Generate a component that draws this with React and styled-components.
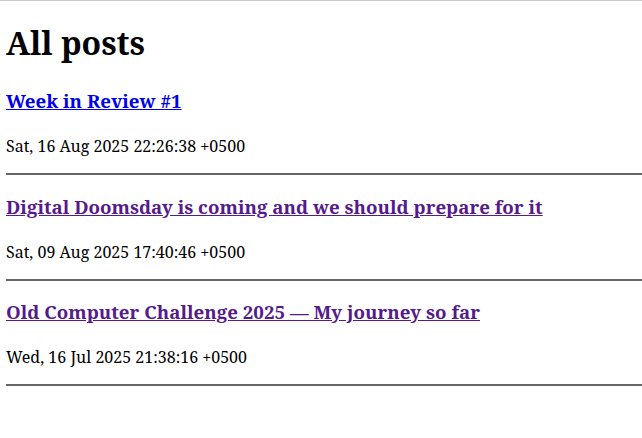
import { createGlobalStyle } from "styled-components";
import styled from "styled-components";

const GlobalStyle = createGlobalStyle`
  html {
    background: #fff;
    box-shadow: inset 0 1px 0 #c8c8c8;
  }
  body {
    margin: 0 0 8px 6px;
    font-family: "Noto Serif", "DejaVu Serif", serif;
    color: #000;
  }
`;

const Title = styled.h1`
  font-size: 2em;
  margin: 21.44px 0 24px;
`;

const PostTitle = styled.h3`
  font-size: 1.17em;
  margin: 18.72px 0;
`;

const PostLink = styled.a`
  color: ${(p) => (p.$visited ? "#551a8b" : "#0000ee")};
  text-decoration: underline;
`;

const PostDate = styled.p`
  margin: 21.8px 0 16px;
`;

const Divider = styled.hr`
  margin: 8px 0;
  border: none;
  border-top: 2px solid #666;
`;

const posts = [
  { title: "Week in Review #1", date: "Sat, 16 Aug 2025 22:26:38 +0500", visited: false },
  {
    title: "Digital Doomsday is coming and we should prepare for it",
    date: "Sat, 09 Aug 2025 17:40:46 +0500",
    visited: true,
  },
  {
    title: "Old Computer Challenge 2025 — My journey so far",
    date: "Wed, 16 Jul 2025 21:38:16 +0500",
    visited: true,
  },
];

export default function App() {
  return (
    <>
      <GlobalStyle />
      <Title>All posts</Title>
      {posts.map((post) => (
        <div key={post.title}>
          <PostTitle>
            <PostLink href="#" $visited={post.visited}>
              {post.title}
            </PostLink>
          </PostTitle>
          <PostDate>{post.date}</PostDate>
          <Divider />
        </div>
      ))}
    </>
  );
}
